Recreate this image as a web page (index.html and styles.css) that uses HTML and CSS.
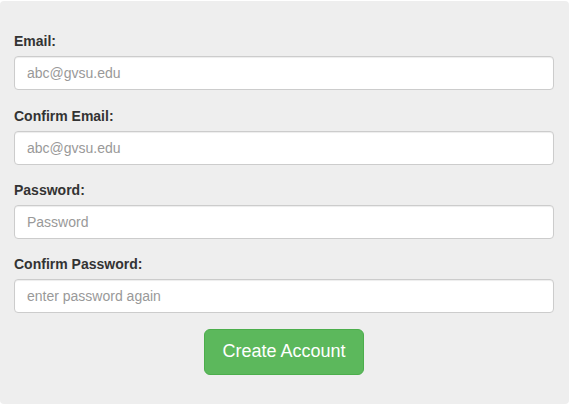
FILE: index.html
```html
<!DOCTYPE html>
<html>
<head>
<meta charset="utf-8">
<link rel="stylesheet" href="styles.css">
</head>
<body>
<form class="panel">
  <div class="group">
    <label class="label">Email:</label>
    <input class="input" type="text" placeholder="abc@gvsu.edu">
  </div>
  <div class="group">
    <label class="label">Confirm Email:</label>
    <input class="input" type="text" placeholder="abc@gvsu.edu">
  </div>
  <div class="group">
    <label class="label">Password:</label>
    <input class="input" type="password" placeholder="Password">
  </div>
  <div class="group">
    <label class="label">Confirm Password:</label>
    <input class="input" type="password" placeholder="enter password again">
  </div>
  <div class="actions">
    <button class="btn" type="button">Create Account</button>
  </div>
</form>
</body>
</html>
```
FILE: styles.css
```css
html, body {
  margin: 0;
  padding: 0;
  background: #fff;
}
body {
  font-family: "Liberation Sans", Arial, sans-serif;
  font-size: 14px;
  line-height: 1.42857;
  color: #333;
}
.panel {
  box-sizing: border-box;
  width: 569px;
  height: 403px;
  margin: 1px 0 0 0;
  padding: 30px 15px 29px 14px;
  background: #eee;
  border-radius: 4px;
  display: flex;
  flex-direction: column;
}
.group {
  display: flex;
  flex-direction: column;
  margin-bottom: 15px;
}
.label {
  display: flex;
  align-items: flex-end;
  font-weight: bold;
  margin-bottom: 5px;
  height: 20.33px;
  line-height: 20px;
}
.input {
  box-sizing: border-box;
  height: 34px;
  width: 100%;
  padding: 6px 12px;
  font-family: "Liberation Sans", Arial, sans-serif;
  font-size: 14px;
  color: #555;
  background: #fff;
  border: 1px solid #ccc;
  border-radius: 4px;
  box-shadow: inset 0 1px 1px rgba(0,0,0,0.075);
  outline: none;
}
.input::placeholder {
  color: #999;
}
.actions {
  display: flex;
  justify-content: center;
  margin-top: 1px;
}
.btn {
  box-sizing: border-box;
  width: 160px;
  height: 46px;
  padding: 10px 16px;
  font-family: "Liberation Sans", Arial, sans-serif;
  font-size: 18px;
  line-height: 1.33;
  color: #fff;
  background: #5cb85c;
  border: 1px solid #4cae4c;
  border-radius: 6px;
  cursor: pointer;
}
```
